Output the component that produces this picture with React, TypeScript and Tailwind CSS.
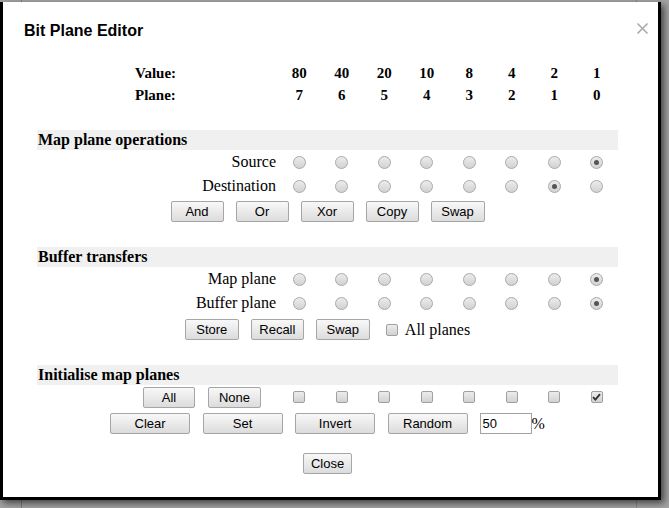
import React from "react";

const cols = [0, 1, 2, 3, 4, 5, 6, 7];

function Btn({ label, w }: { label: string; w: string }) {
  return (
    <div
      className={`${w} h-[21px] flex items-center justify-center border border-[#a6a6a6] rounded-[2px] bg-gradient-to-b from-[#f8f8f8] to-[#dcdcdc] text-[13px] text-black leading-none font-['Liberation_Sans',Arial,sans-serif]`}
    >
      {label}
    </div>
  );
}

function Radio({ checked }: { checked?: boolean }) {
  return (
    <div className="w-[13px] h-[13px] rounded-full border border-[#a8a8a8] bg-gradient-to-b from-[#ececec] to-[#d2d2d2] flex items-center justify-center">
      {checked && <div className="w-[5px] h-[5px] rounded-full bg-[#555]" />}
    </div>
  );
}

function Check({ checked }: { checked?: boolean }) {
  return (
    <div className="w-[12px] h-[12px] rounded-[2px] border border-[#a0a0a0] bg-gradient-to-b from-[#ececec] to-[#d2d2d2] flex items-center justify-center">
      {checked && (
        <svg width="9" height="8" viewBox="0 0 9 8">
          <path d="M1 4.2 L3.4 6.6 L8 1.2" stroke="#333" strokeWidth="1.9" fill="none" />
        </svg>
      )}
    </div>
  );
}

const gridCls = "grid grid-cols-[241px_repeat(8,42.5px)] items-center";
const serif = "font-['Liberation_Serif','Times_New_Roman',serif]";

function Header({ title }: { title: string }) {
  return (
    <div className={`h-[20px] bg-[#f0f0f0] pl-[1px] text-[16px] leading-[20px] font-bold text-black ${serif}`}>
      {title}
    </div>
  );
}

function RadioRow({ label, sel }: { label: string; sel: number }) {
  return (
    <div className={`${gridCls} h-[24px]`}>
      <div className={`text-right pr-[2px] text-[16px] leading-[24px] text-black ${serif}`}>{label}</div>
      {cols.map((c) => (
        <div key={c} className="flex justify-center">
          <Radio checked={c === sel} />
        </div>
      ))}
    </div>
  );
}

export default function App() {
  const values = ["80", "40", "20", "10", "8", "4", "2", "1"];
  const planes = ["7", "6", "5", "4", "3", "2", "1", "0"];
  return (
    <div className="relative w-[669px] h-[508px] bg-[#a3a3a3] overflow-hidden">
      <div className="absolute left-[21px] top-0 w-px h-full bg-[#7c7c7c]" />
      <div className="absolute left-[636px] top-0 w-px h-full bg-[#8a8a8a]" />
      <div className="relative mt-[2px] w-[661px] h-[498px] bg-white border-l-[3px] border-r-[3px] border-b-[3px] border-black shadow-[3px_3px_7px_rgba(0,0,0,0.6)]">
        <div className="absolute left-[633px] top-[20px]">
          <svg width="13" height="13" viewBox="0 0 13 13">
            <path d="M1.5 1.5 L11.5 11.5 M11.5 1.5 L1.5 11.5" stroke="#aaaaaa" strokeWidth="1.6" />
          </svg>
        </div>
        <div className="pt-[19px] pl-[21px] text-[16px] leading-[20px] font-bold text-black font-['Liberation_Sans',Arial,sans-serif]">
          Bit Plane Editor
        </div>
        <div className="ml-[34px] w-[581px] mt-[21px]">
          <div className={`${gridCls} h-[22px] text-[15px] font-bold text-black ${serif}`}>
            <div className="pl-[98px]">Value:</div>
            {values.map((v) => (
              <div key={v} className="text-center">{v}</div>
            ))}
          </div>
          <div className={`${gridCls} h-[22px] text-[15px] font-bold text-black ${serif}`}>
            <div className="pl-[98px]">Plane:</div>
            {planes.map((v) => (
              <div key={v} className="text-center">{v}</div>
            ))}
          </div>

          <div className="mt-[24px]">
            <Header title="Map plane operations" />
            <RadioRow label="Source" sel={7} />
            <RadioRow label="Destination" sel={6} />
            <div className="flex justify-center gap-[12px] mt-[3px]">
              <Btn label="And" w="w-[53px]" />
              <Btn label="Or" w="w-[53px]" />
              <Btn label="Xor" w="w-[53px]" />
              <Btn label="Copy" w="w-[53px]" />
              <Btn label="Swap" w="w-[54px]" />
            </div>
          </div>

          <div className="mt-[25px]">
            <Header title="Buffer transfers" />
            <RadioRow label="Map plane" sel={7} />
            <RadioRow label="Buffer plane" sel={7} />
            <div className="flex justify-center items-center mt-[4px]">
              <Btn label="Store" w="w-[54px]" />
              <div className="w-[12px]" />
              <Btn label="Recall" w="w-[53px]" />
              <div className="w-[12px]" />
              <Btn label="Swap" w="w-[54px]" />
              <div className="w-[16px]" />
              <Check />
              <div className={`ml-[7px] text-[16px] leading-[21px] text-black ${serif}`}>All planes</div>
            </div>
          </div>

          <div className="mt-[25px]">
            <Header title="Initialise map planes" />
            <div className={`${gridCls} h-[24px]`}>
              <div className="flex justify-end gap-[13px] pr-[17px]">
                <Btn label="All" w="w-[52px]" />
                <Btn label="None" w="w-[53px]" />
              </div>
              {cols.map((c) => (
                <div key={c} className="flex justify-center">
                  <Check checked={c === 7} />
                </div>
              ))}
            </div>
            <div className="flex justify-center items-center mt-[4px]">
              <Btn label="Clear" w="w-[80px]" />
              <div className="w-[12.5px]" />
              <Btn label="Set" w="w-[80px]" />
              <div className="w-[12.5px]" />
              <Btn label="Invert" w="w-[80px]" />
              <div className="w-[12.5px]" />
              <Btn label="Random" w="w-[80px]" />
              <div className="w-[12px]" />
              <div className="w-[52px] h-[21px] border border-[#a3a3a3] bg-white pl-[2px] text-[13px] leading-[19px] text-black font-['Liberation_Sans',Arial,sans-serif]">
                50
              </div>
              <div className={`text-[16px] leading-[21px] text-black ${serif}`}>%</div>
            </div>
            <div className="flex justify-center mt-[19px]">
              <Btn label="Close" w="w-[49px]" />
            </div>
          </div>
        </div>
      </div>
    </div>
  );
}
